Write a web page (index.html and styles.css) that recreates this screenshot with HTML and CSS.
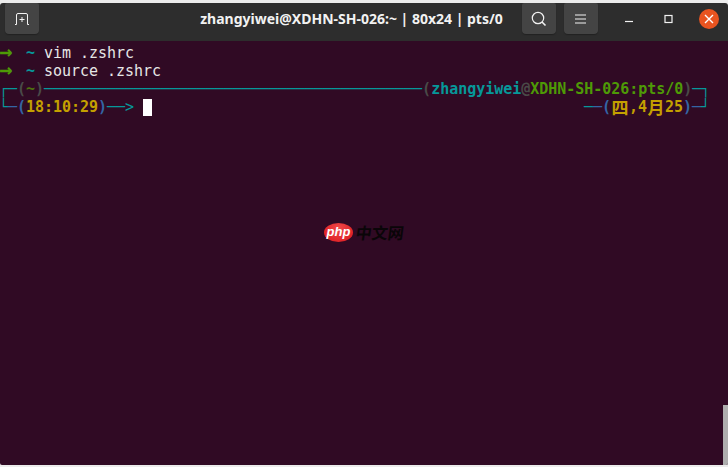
FILE: index.html
```html
<!DOCTYPE html>
<html lang="zh">
<head>
<meta charset="utf-8">
<title>Terminal</title>
<link rel="stylesheet" href="styles.css">
</head>
<body>
<div class="window">
  <header class="titlebar">
    <button class="tool">
      <svg width="16" height="14" viewBox="0 0 16 14"><path d="M1 12.500H2.500V3Q2.500 1.500 4 1.500H12Q13.500 1.500 13.500 3V12.500H15M8 5V10M5.500 7.500H10.500" fill="none" stroke="#f2f2f2" stroke-width="1"/></svg>
    </button>
    <div class="title">zhangyiwei@XDHN-SH-026:~ | 80x24 | pts/0</div>
    <div class="tools">
      <button class="tool">
        <svg width="16" height="16" viewBox="0 0 16 16"><circle cx="7" cy="7" r="5.700" fill="none" stroke="#f2f2f2" stroke-width="1.200"/><path d="M11 11L14.500 14.500" stroke="#f2f2f2" stroke-width="1.600"/></svg>
      </button>
      <button class="tool">
        <svg width="12" height="10" viewBox="0 0 12 10"><path d="M0 1H11M0 5H11M0 9H11" stroke="#f2f2f2" stroke-width="1"/></svg>
      </button>
    </div>
    <div class="controls">
      <span class="control"><svg width="10" height="10" viewBox="0 0 10 10"><path d="M1 7.500H9" stroke="#f2f2f2" stroke-width="1.200"/></svg></span>
      <span class="control"><svg width="10" height="10" viewBox="0 0 10 10"><rect x="1" y="1.500" width="7" height="7" fill="none" stroke="#f2f2f2" stroke-width="1.200"/></svg></span>
      <span class="control close"><svg width="10" height="10" viewBox="0 0 10 10"><path d="M1 1L9 9M9 1L1 9" stroke="#fff" stroke-width="1.400"/></svg></span>
    </div>
  </header>
  <main class="terminal">
    <pre class="row"><b class="prompt">→</b>  <b class="cyan">~</b> vim .zshrc</pre>
    <pre class="row"><b class="prompt">→</b>  <b class="cyan">~</b> source .zshrc</pre>
    <pre class="row"><span class="cyan">┌─</span><b class="gray">(</b><b class="olive">~</b><b class="gray">)</b><span class="cyan">──────────────────────────────────────────</span><b class="gray">(</b><b class="cyan">zhangyiwei</b><b class="gray">@</b><b class="green">XDHN-SH-026:pts/0</b><b class="gray">)</b><span class="cyan">─┐</span></pre>
    <pre class="row split"><span><span class="cyan">└</span><span class="blue">─</span><b class="blue">(</b><b class="yellow">18:10:29</b><b class="blue">)</b><span class="cyan">──&gt;</span> <i class="cursor"></i></span><span><span class="cyan">─</span><span class="blue">─</span><b class="blue">(</b><b class="yellow"><span class="wide">四</span>,4<span class="wide">月</span>25</b><b class="blue">)</b><span class="blue">─</span><span class="cyan">┘</span></span></pre>
    <div class="scrollbar"></div>
    <div class="logo"><span class="php">php</span><span class="cn">中文网</span></div>
  </main>
</div>
</body>
</html>
```
FILE: styles.css
```css
* { box-sizing: border-box; }
html, body { margin: 0; height: 100%; overflow: hidden; background: #ececec; }
.window { width: 728px; height: 467px; padding-top: 3px; padding-bottom: 2px; display: flex; flex-direction: column; }
.titlebar { height: 38px; flex: none; background: #2d2d2d; border-radius: 3px 3px 0 0; display: flex; align-items: flex-start; padding-left: 5px; }
.tool { width: 34px; height: 31px; border: 0; border-radius: 2px 2px 4px 4px; background: #444; padding: 0; display: flex; align-items: center; justify-content: center; box-shadow: 0 1px 1px #222; }
.tool svg { display: block; }
.title { flex: 1; text-align: center; font: 700 14px/31px "Noto Sans", sans-serif; color: #f2f2f2; padding-left: 142px; white-space: nowrap; }
.tools { display: flex; gap: 8px; margin-right: 21px; }
.controls { display: flex; align-items: center; height: 31px; padding-right: 9px; gap: 20px; }
.control { width: 20px; height: 20px; display: flex; align-items: center; justify-content: center; }
.control svg { display: block; }
.close { background: #e95420; border-radius: 50%; }
.terminal { flex: 1; background: #300a24; padding: 3px 0 0 0; position: relative; overflow: hidden; border-radius: 0 0 2px 2px; }
.row { margin: 0 0 0 -1px; width: 711px; height: 18px; font: 15px/18px "DejaVu Sans Mono", monospace; letter-spacing: -0.03px; color: #e6e6e6; white-space: pre; overflow: visible; }
.split { display: flex; justify-content: space-between; }
.prompt { display: inline-block; width: 9px; height: 18px; color: #4e9a06; font-size: 22px; line-height: 16px; vertical-align: top; }
.green { color: #4e9a06; }
.cyan { color: #06989a; }
.gray { color: #4a4a48; }
.olive { color: #4e7010; }
.blue { color: #3465a4; }
.yellow { color: #c4a000; }
.wide { display: inline-block; width: 18px; height: 18px; text-align: center; font: 700 17px/18px "Noto Sans CJK SC", sans-serif; vertical-align: top; }
.cursor { display: inline-block; width: 9px; height: 17px; background: #fff; vertical-align: -4px; }
.scrollbar { position: absolute; right: 0; bottom: 0; width: 5px; height: 60px; background: #aeaeae; }
.logo { position: absolute; left: 324px; top: 182px; display: flex; align-items: center; }
.php { width: 29px; height: 19px; border-radius: 50%; background: radial-gradient(ellipse at 50% 30%, #f04a4a, #d9141a); color: #fff; font: italic 700 13px/18px "Liberation Sans", sans-serif; text-align: center; }
.cn { font: 700 16px/19px "Noto Sans CJK SC", sans-serif; color: #0a0508; margin-left: 3px; transform: skewX(-8deg); }
```
